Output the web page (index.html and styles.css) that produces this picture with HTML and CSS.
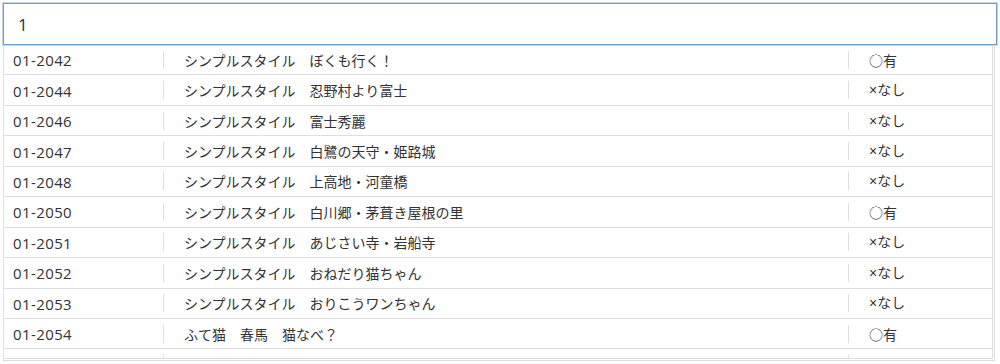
FILE: index.html
```html
<!DOCTYPE html>
<html lang="ja">
<head>
<meta charset="utf-8">
<link rel="stylesheet" href="styles.css">
</head>
<body>
<div class="wrap">
  <input class="search" type="text" value="1">
  <div class="list">
    <div class="row"><div class="c1">01-2042</div><div class="c2">シンプルスタイル　ぼくも行く！</div><div class="c3"><span class="maru">○</span>有</div></div>
    <div class="row"><div class="c1">01-2044</div><div class="c2">シンプルスタイル　忍野村より富士</div><div class="c3">×なし</div></div>
    <div class="row"><div class="c1">01-2046</div><div class="c2">シンプルスタイル　富士秀麗</div><div class="c3">×なし</div></div>
    <div class="row"><div class="c1">01-2047</div><div class="c2">シンプルスタイル　白鷺の天守・姫路城</div><div class="c3">×なし</div></div>
    <div class="row"><div class="c1">01-2048</div><div class="c2">シンプルスタイル　上高地・河童橋</div><div class="c3">×なし</div></div>
    <div class="row"><div class="c1">01-2050</div><div class="c2">シンプルスタイル　白川郷・茅葺き屋根の里</div><div class="c3"><span class="maru">○</span>有</div></div>
    <div class="row"><div class="c1">01-2051</div><div class="c2">シンプルスタイル　あじさい寺・岩船寺</div><div class="c3">×なし</div></div>
    <div class="row"><div class="c1">01-2052</div><div class="c2">シンプルスタイル　おねだり猫ちゃん</div><div class="c3">×なし</div></div>
    <div class="row"><div class="c1">01-2053</div><div class="c2">シンプルスタイル　おりこうワンちゃん</div><div class="c3">×なし</div></div>
    <div class="row"><div class="c1">01-2054</div><div class="c2">ふて猫　春馬　猫なべ？</div><div class="c3"><span class="maru">○</span>有</div></div>
    <div class="row"><div class="c1">01-2055</div><div class="c2">ふて猫　春馬　猫鍋ねる</div><div class="c3"><span class="maru">○</span>有</div></div>
  </div>
</div>
</body>
</html>
```

FILE: styles.css
```css
* { box-sizing: border-box; }
html, body { margin: 0; padding: 0; background: #fff; }
body {
  font-family: "Noto Sans CJK JP", "Noto Sans", sans-serif;
  color: #333;
  height: 364px;
  overflow: hidden;
}
.wrap {
  padding: 3px 3px 0 3px;
  display: flex;
  flex-direction: column;
}
.search {
  display: block;
  width: 994px;
  height: 42px;
  margin: 0;
  border: 1px solid #6c9fd3;
  box-shadow: 0 0 0 1px rgba(120, 165, 215, 0.45);
  outline: none;
  padding: 0 0 0 14px;
  font-family: "Open Sans", "Noto Sans CJK JP", sans-serif;
  font-size: 17px;
  color: #333;
  background: #fff;
}
.list {
  width: 992px;
  height: 316px;
  overflow: hidden;
  border-left: 1px solid #e0e0e0;
  border-right: 3px double #dcdcdc;
  border-bottom: 3px double #dcdcdc;
}
.row {
  display: grid;
  grid-template-columns: 159px 685px 1fr;
  align-items: center;
  height: 30.45px;
  border-bottom: 1px solid #dedede;
  font-size: 14px;
}
.c1 {
  padding-left: 9px;
  font-family: "Open Sans", "Noto Sans CJK JP", sans-serif;
  font-size: 15px;
  letter-spacing: 0.4px;
  line-height: 20px;
  padding-top: 1px;
  color: #333;
}
.c2, .c3 {
  border-left: 1px solid #dfdfdf;
  height: 18px;
  line-height: 18px;
  padding-left: 20px;
  white-space: nowrap;
}
.c3 {
  font-family: "Liberation Sans", "Noto Sans CJK JP", sans-serif;
}
.maru {
  font-family: "Noto Sans CJK JP", sans-serif;
}
```
